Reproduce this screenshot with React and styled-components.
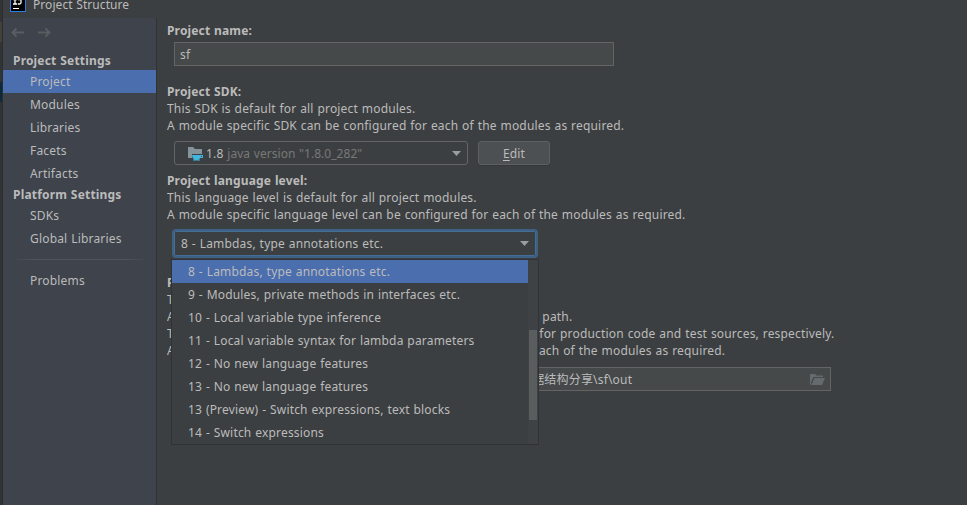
import React from 'react';
import styled, { createGlobalStyle, css } from 'styled-components';

const GlobalStyle = createGlobalStyle`
  *, *::before, *::after { box-sizing: border-box; }
  body {
    margin: 0;
    overflow: hidden;
    background: #3c3f41;
    color: #bbbbbb;
    font: 12px/17px "Noto Sans", "Noto Sans CJK SC", sans-serif;
    letter-spacing: 0.18px;
    word-spacing: 0.5px;
    white-space: nowrap;
  }
`;

const Screen = styled.div`
  display: flex;
  width: 967px;
  height: 505px;
  overflow: hidden;
`;

const EditorEdge = styled.div`
  display: flex;
  flex-direction: column;
  flex: none;
  width: 3px;
  height: 505px;
  background: #313335;
  border-right: 1px solid #2b2d2e;
`;

const EdgeMark = styled.div`
  height: 20px;
  margin-top: ${(p) => p.$gap}px;
  background: ${(p) => p.$color};
`;

const Dialog = styled.div`
  display: flex;
  flex-direction: column;
  flex: 1;
  min-width: 0;
`;

const TitleBar = styled.header`
  display: flex;
  flex: none;
  height: 18px;
  padding-left: 7px;
`;

const Logo = styled.svg`
  flex: none;
  width: 16px;
  height: 16px;
  margin-top: -4px;
`;

const Title = styled.span`
  margin: -4px 0 0 7px;
  letter-spacing: 0.06px;
`;

const Body = styled.div`
  display: flex;
  flex: 1;
  min-height: 0;
`;

const Sidebar = styled.nav`
  display: flex;
  flex-direction: column;
  flex: none;
  width: 154px;
  background: #3e434c;
  border-right: 1px solid #323232;
`;

const History = styled.div`
  display: flex;
  gap: 14px;
  height: 34px;
  padding: 9px 0 0 8px;
  color: #5a5d60;
`;

const ArrowIcon = styled.svg`
  width: 13px;
  height: 11px;
`;

const GroupTitle = styled.h2`
  height: ${(p) => p.$height}px;
  margin: 0;
  padding: 0 0 0 10px;
  font-size: 12px;
  font-weight: 700;
  line-height: ${(p) => p.$height}px;
`;

const NavItem = styled.a`
  flex: none;
  height: 23px;
  padding-left: 27px;
  line-height: 23px;
  background: ${(p) => (p.$active ? '#4b6eaf' : 'transparent')};
`;

const Divider = styled.div`
  height: 1px;
  margin: 9px 8px;
  background: linear-gradient(90deg, transparent, #515356 15%, #515356 85%, transparent);
`;

const Content = styled.main`
  display: flex;
  flex-direction: column;
  flex: 1;
  min-width: 0;
  padding: 4px 0 0 10px;
`;

const Section = styled.section`
  display: flex;
  flex-direction: column;
  height: ${(p) => p.$height}px;
`;

const Label = styled.h3`
  margin: 0;
  font-size: 12px;
  font-weight: 700;
  line-height: 17px;
  letter-spacing: 0.15px;
`;

const Hint = styled.p`
  margin: 0;
`;

const ControlRow = styled.div`
  position: relative;
  display: flex;
  gap: 10px;
  margin: ${(p) => p.$gap}px 0 0 7px;
`;

const fieldBox = css`
  display: flex;
  align-items: center;
  height: 24px;
  border: 1px solid #646464;
`;

const TextField = styled.div`
  ${fieldBox}
  width: ${(p) => p.$width}px;
  padding: 0 ${(p) => (p.$path ? '5px 0 345px' : '5px')};
  background: #45494a;
`;

const FieldText = styled.span`
  flex: 1;
`;

const FolderIcon = styled.svg`
  width: 15px;
  height: 11px;
`;

const Select = styled.div`
  ${fieldBox}
  width: 294px;
  padding: 0 6px 0 12px;
  border-radius: 3px;
`;

const FocusedSelect = styled.div`
  display: flex;
  align-items: center;
  width: 366px;
  height: 29px;
  margin-left: -2px;
  padding: 0 7px 0 6px;
  border: 2px solid #3d6185;
  border-radius: 4px;
  box-shadow: inset 0 0 0 1px #466d94;
`;

const SelectValue = styled.span`
  flex: 1;
  padding-left: 1px;
`;

const SdkIcon = styled.svg`
  width: 16px;
  height: 16px;
  margin-right: 2px;
`;

const Muted = styled.span`
  color: #787878;
  letter-spacing: 0.04px;
`;

const Caret = styled.svg`
  width: 9px;
  height: 5px;
`;

const Button = styled.button`
  width: 72px;
  height: 24px;
  padding: 0;
  border: 1px solid #5e6060;
  border-radius: 3px;
  background: #4c5052;
  box-shadow: 0 1px 0 #35383a;
  color: inherit;
  font: inherit;
  letter-spacing: inherit;
`;

const Mnemonic = styled.span`
  text-decoration: underline;
  text-underline-offset: 2px;
`;

const Popup = styled.div`
  position: absolute;
  z-index: 1;
  top: 30px;
  left: -3px;
  display: flex;
  width: 368px;
  height: 186px;
  border: 1px solid #303233;
  background: #3c3f41;
`;

const Options = styled.div`
  flex: 1;
`;

const Option = styled.div`
  height: 23px;
  padding-left: 16px;
  line-height: 23px;
  background: ${(p) => (p.$selected ? '#4b6eaf' : 'transparent')};
`;

const Scrollbar = styled.div`
  width: 10px;
  padding: 70px 1px 0;
  background: #3f4244;
`;

const Thumb = styled.div`
  height: 90px;
  background: #5a5d5d;
`;

const projectItems = ['Project', 'Modules', 'Libraries', 'Facets', 'Artifacts'];
const platformItems = ['SDKs', 'Global Libraries'];
const levels = [
  '8 - Lambdas, type annotations etc.',
  '9 - Modules, private methods in interfaces etc.',
  '10 - Local variable type inference',
  '11 - Local variable syntax for lambda parameters',
  '12 - No new language features',
  '13 - No new language features',
  '13 (Preview) - Switch expressions, text blocks',
  '14 - Switch expressions',
];

const Arrow = ({ d }) => (
  <ArrowIcon viewBox="0 0 13 11" fill="none" stroke="currentColor" strokeWidth="2">
    <path d={d} />
  </ArrowIcon>
);

const DownCaret = () => (
  <Caret viewBox="0 0 9 5">
    <path d="M0 0H9L4.5 5Z" fill="#9a9da0" />
  </Caret>
);

export default function App() {
  return (
    <Screen>
      <GlobalStyle />
      <EditorEdge>
        <EdgeMark $gap={22} $color="#45403a" />
        <EdgeMark $gap={40} $color="#0d293e" />
      </EditorEdge>
      <Dialog>
        <TitleBar>
          <Logo viewBox="0 0 16 16">
            <rect x="0.5" y="0.5" width="15" height="15" fill="#000" stroke="#2b7de0" />
            <path d="M3 3.5H7M5 3.5V8M3 8H7M8 3.5H11V6.5Q11 8 9.5 8H7.8" fill="none" stroke="#fff" strokeWidth="1.3" />
            <path d="M3 12.5H9" stroke="#fff" />
          </Logo>
          <Title>Project Structure</Title>
        </TitleBar>
        <Body>
          <Sidebar>
            <History>
              <Arrow d="M13 5.5H1.5M5.5 1.5L1.5 5.5L5.5 9.5" />
              <Arrow d="M0 5.5H11.5M7.5 1.5L11.5 5.5L7.5 9.5" />
            </History>
            <GroupTitle $height={18}>Project Settings</GroupTitle>
            {projectItems.map((item) => (
              <NavItem key={item} $active={item === 'Project'}>{item}</NavItem>
            ))}
            <GroupTitle $height={19}>Platform Settings</GroupTitle>
            {platformItems.map((item) => (
              <NavItem key={item}>{item}</NavItem>
            ))}
            <Divider />
            <NavItem>Problems</NavItem>
          </Sidebar>
          <Content>
            <Section $height={61}>
              <Label>Project name:</Label>
              <ControlRow $gap={3}>
                <TextField $width={440}>sf</TextField>
              </ControlRow>
            </Section>
            <Section $height={89}>
              <Label>Project SDK:</Label>
              <Hint>This SDK is default for all project modules.</Hint>
              <Hint>A module specific SDK can be configured for each of the modules as required.</Hint>
              <ControlRow $gap={7}>
                <Select>
                  <SdkIcon viewBox="0 0 16 16">
                    <path d="M1 2H6L8 4H15V9H5V13H1Z" fill="#87939a" />
                    <path d="M5 10H16V13H13.3Q12.5 14.4 11 14.6H13V15.5H6V14.6H7.5Q5 13.5 5 10ZM14 11V12H15V11Z" fill="#40b6e0" fillRule="evenodd" />
                  </SdkIcon>
                  <SelectValue>1.8 <Muted>java version "1.8.0_282"</Muted></SelectValue>
                  <DownCaret />
                </Select>
                <Button><Mnemonic>E</Mnemonic>dit</Button>
              </ControlRow>
            </Section>
            <Section $height={102}>
              <Label>Project language level:</Label>
              <Hint>This language level is default for all project modules.</Hint>
              <Hint>A module specific language level can be configured for each of the modules as required.</Hint>
              <ControlRow $gap={6}>
                <FocusedSelect>
                  <SelectValue>{levels[0]}</SelectValue>
                  <DownCaret />
                </FocusedSelect>
                <Popup>
                  <Options>
                    {levels.map((level, i) => (
                      <Option key={level} $selected={i === 0}>{level}</Option>
                    ))}
                  </Options>
                  <Scrollbar><Thumb /></Scrollbar>
                </Popup>
              </ControlRow>
            </Section>
            <Section $height={120}>
              <Label>Project compiler output:</Label>
              <Hint>This path is used to store all project compilation results.</Hint>
              <Hint>A directory corresponding to each module is created under this path.</Hint>
              <Hint>This directory contains two subdirectories: Production and Test for production code and test sources, respectively.</Hint>
              <Hint>A module specific compiler output path can be configured for each of the modules as required.</Hint>
              <ControlRow $gap={8}>
                <TextField $width={657} $path>
                  <FieldText>数据结构分享\sf\out</FieldText>
                  <FolderIcon viewBox="0 0 15 11">
                    <path d="M0 0H5L6.5 1.5H13V3H3.5L1 8.5V10.5H0Z" fill="#646a6e" />
                    <path d="M4.5 4H15L12 11H1.3Z" fill="#646a6e" />
                  </FolderIcon>
                </TextField>
              </ControlRow>
            </Section>
          </Content>
        </Body>
      </Dialog>
    </Screen>
  );
}
